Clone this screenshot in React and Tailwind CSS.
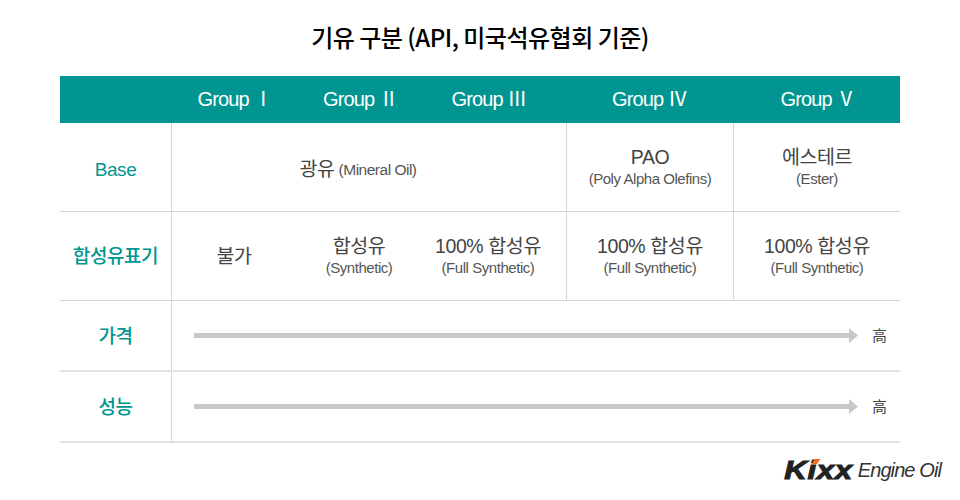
const font = "font-['Liberation_Sans','Noto_Sans_CJK_KR',sans-serif]"

function Label({ children, className = 'pt-[3px]' }) {
  return (
    <div className={`w-[112px] shrink-0 self-stretch flex items-center justify-center border-r border-[#d6d6d6] text-[19px] tracking-[-0.4px] font-medium text-[#009591] ${className}`}>
      {children}
    </div>
  )
}

function Cell({ title, sub, className }) {
  return (
    <div className={`flex flex-col items-center justify-center pb-[2px] ${className}`}>
      <div className="text-[19.5px] leading-[24px] tracking-[-0.4px] text-[#444]">{title}</div>
      <div className="text-[15px] leading-[18px] tracking-[-0.45px] text-[#555] mt-[1px]">{sub}</div>
    </div>
  )
}

function ArrowRow({ label, height }) {
  return (
    <div className={`flex items-center border-b-2 border-[#e2e2e2] ${height}`}>
      <Label>{label}</Label>
      <div className="flex-1 flex items-center pl-[22px] pr-[13px]">
        <div className="flex-1 h-[5px] bg-[#c8c8c8]" />
        <svg width="9" height="15" viewBox="0 0 9 15" className="shrink-0">
          <path d="M0 0 L9 7.5 L0 15 Z" fill="#c8c8c8" />
        </svg>
        <span className="ml-[14px] text-[15px] text-[#444] font-['Noto_Sans_CJK_KR',sans-serif]">高</span>
      </div>
    </div>
  )
}

export default function App() {
  return (
    <div className={`w-[960px] h-[500px] bg-white overflow-hidden ${font}`}>
      <h1 className="h-[76px] pt-[21px] text-center text-[24px] leading-[32px] tracking-[-0.5px] font-medium text-black font-['Noto_Sans_CJK_KR',sans-serif]">
        기유 구분 (API, 미국석유협회 기준)
      </h1>
      <div className="mx-[60px] w-[840px]">
        <div className="h-[47px] pb-[2px] flex items-center bg-[#009591] text-white text-[20px] tracking-[-0.9px]">
          <div className="w-[112px]" />
          <div className="w-[126px] text-center">Group Ⅰ</div>
          <div className="w-[125px] text-center">Group Ⅱ</div>
          <div className="w-[132px] text-center">Group Ⅲ</div>
          <div className="w-[11px]" />
          <div className="w-[167px] text-center">Group Ⅳ</div>
          <div className="w-[167px] pl-[3px] text-center">Group Ⅴ</div>
        </div>

        <div className="h-[89px] flex border-b border-[#d6d6d6]">
          <Label className="pt-[6px]">Base</Label>
          <div className="w-[395px] pr-[22px] pt-[6px] flex items-center justify-center border-r border-[#d6d6d6]">
            <span className="text-[19.5px] tracking-[-0.4px] text-[#444]">광유</span>
            <span className="ml-1 text-[15.5px] tracking-[-0.5px] text-[#555]">(Mineral Oil)</span>
          </div>
          <Cell title="PAO" sub="(Poly Alpha Olefins)" className="w-[167px] border-r border-[#d6d6d6]" />
          <Cell title="에스테르" sub="(Ester)" className="w-[166px]" />
        </div>

        <div className="h-[89px] flex border-b border-[#d6d6d6]">
          <Label>합성유표기</Label>
          <div className="w-[395px] flex border-r border-[#d6d6d6]">
            <div className="w-[124px] pt-[2px] flex items-center justify-center text-[19.5px] tracking-[-0.4px] text-[#444]">불가</div>
            <Cell title="합성유" sub="(Synthetic)" className="w-[126px]" />
            <Cell title="100% 합성유" sub="(Full Synthetic)" className="w-[132px]" />
          </div>
          <Cell title="100% 합성유" sub="(Full Synthetic)" className="w-[167px] border-r border-[#d6d6d6]" />
          <Cell title="100% 합성유" sub="(Full Synthetic)" className="w-[166px]" />
        </div>

        <ArrowRow label="가격" height="h-[71px]" />
        <ArrowRow label="성능" height="h-[71px]" />
      </div>

      <div className="mt-[13px] pr-[19px] flex justify-end items-center">
        <span className="relative text-[25px] leading-[28px] font-black italic tracking-[0.5px] text-[#222] [-webkit-text-stroke:1px_#222] scale-x-[1.25] origin-right mr-[5px]">
          Kixx
          <svg width="7" height="5" viewBox="0 0 7 5" className="absolute left-[22px] top-[3px]">
            <path d="M2 0 H7 L4 5 H0 Z" fill="#f26b21" />
          </svg>
        </span>
        <span className="text-[20px] leading-[28px] italic tracking-[-0.9px] text-[#333]">Engine Oil</span>
      </div>
    </div>
  )
}
